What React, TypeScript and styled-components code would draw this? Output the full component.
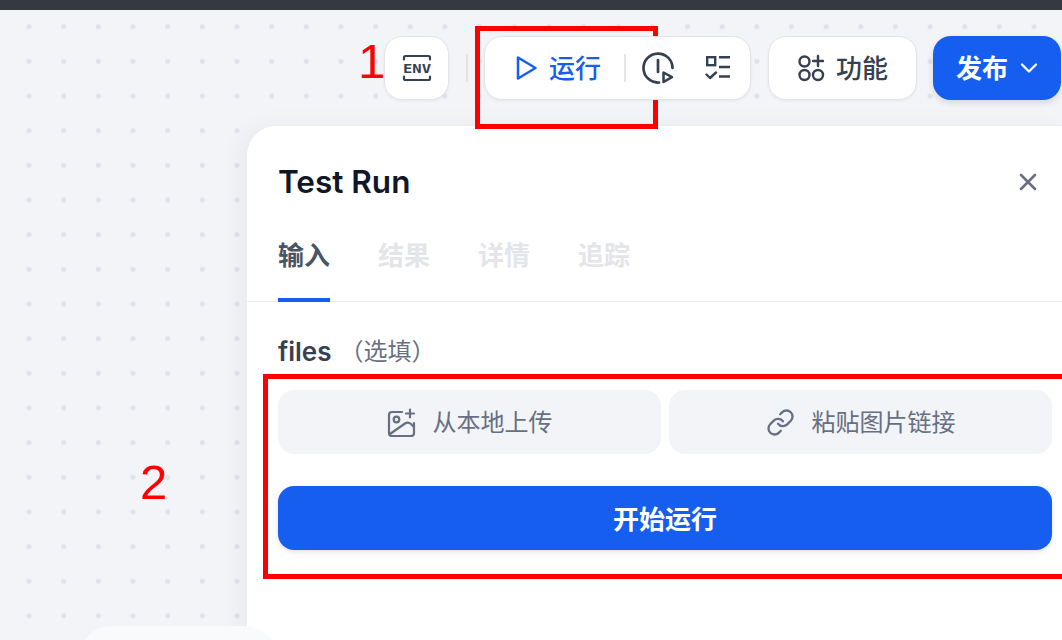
import { FC } from "react";
import styled, { createGlobalStyle } from "styled-components";

const GlobalStyle = createGlobalStyle`
  html, body {
    margin: 0;
    padding: 0;
    width: 1062px;
    height: 640px;
    overflow: hidden;
    font-family: Inter, "Noto Sans CJK SC", sans-serif;
  }
  * {
    box-sizing: border-box;
  }
`;

const Page = styled.div`
  position: relative;
  display: flex;
  flex-direction: column;
  width: 1062px;
  height: 640px;
  overflow: hidden;
`;

const TopStrip = styled.div`
  flex: none;
  height: 10px;
  background-color: #353a40;
`;

const Canvas = styled.div`
  position: relative;
  flex: 1;
  min-height: 0;
  display: flex;
  flex-direction: column;
  padding-top: 26px;
  background-color: #f2f4f7;
  background-image: radial-gradient(circle, #e1e3ec 2.4px, transparent 2.9px);
  background-size: 34.67px 34.67px;
  background-position: 11.7px -0.6px;
`;

const Toolbar = styled.div`
  position: relative;
  z-index: 1;
  flex: none;
  display: flex;
  justify-content: flex-end;
  align-items: center;
  height: 64px;
  padding-right: 1px;
`;

const ToolCard = styled.div`
  display: flex;
  align-items: center;
  height: 64px;
  background-color: #fff;
  border: 1px solid #e3e5e9;
  border-radius: 18px;
  box-shadow: 0 1px 3px rgba(16, 24, 40, 0.06);
`;

const EnvCard = styled(ToolCard)`
  width: 65px;
  justify-content: center;
`;

const ToolDivider = styled.div<{ $gap: number }>`
  width: 2px;
  height: 28px;
  margin: 0 ${(props) => props.$gap}px;
  background-color: #e3e5e9;
`;

const RunGroup = styled(ToolCard)`
  width: 267px;
  padding-left: 29px;
  margin-right: 17px;
  margin-left: -1px;
`;

const RunLabel = styled.span`
  margin: 2px 23px 0 11px;
  font-size: 26px;
  font-weight: 500;
  line-height: 1;
  color: #155eef;
`;

const ClockIcon = styled.svg`
  margin-left: 16px;
  flex: none;
`;

const ListIcon = styled.svg`
  margin-left: 31px;
  flex: none;
`;

const FeatureCard = styled(ToolCard)`
  width: 149px;
  justify-content: center;
  gap: 11px;
  margin-right: 16px;
  font-size: 26px;
  font-weight: 500;
  color: #354052;
`;

// the CJK face sits a little low in its line box
const RaisedLabel = styled.span<{ $by: number }>`
  margin-bottom: ${(props) => props.$by}px;
`;

const PublishButton = styled.button`
  display: flex;
  align-items: center;
  justify-content: center;
  gap: 12px;
  width: 128px;
  height: 64px;
  padding: 0;
  border: none;
  border-radius: 18px;
  background-color: #155eef;
  box-shadow: 0 3px 6px rgba(16, 24, 40, 0.12);
  color: #fff;
  font-family: inherit;
  font-size: 26px;
  font-weight: 600;
`;

const Panel = styled.section`
  flex: 1;
  display: flex;
  flex-direction: column;
  margin-top: 25px;
  margin-left: 246px;
  background-color: #fff;
  border-top: 1px solid #eceef2;
  border-left: 1px solid #eceef2;
  border-top-left-radius: 30px;
  box-shadow: -8px 0 24px rgba(16, 24, 40, 0.04);
`;

const PanelHeader = styled.div`
  display: flex;
  align-items: center;
  justify-content: space-between;
  height: 38px;
  margin-top: 37px;
  padding: 0 24px 0 31px;
`;

const PanelTitle = styled.h2`
  margin: 0;
  font-size: 31.5px;
  font-weight: 600;
  line-height: 38px;
  color: #101828;
`;

const Tabs = styled.div`
  display: flex;
  gap: 48px;
  margin-top: 29px;
  padding-left: 31px;
  border-bottom: 1px solid #eaecf0;
`;

const Tab = styled.div<{ $active?: boolean }>`
  height: 72px;
  padding-top: 8px;
  font-size: 26px;
  line-height: 36px;
  font-weight: 600;
  color: ${(props) => (props.$active ? "#495464" : "#e3e5e9")};
  border-bottom: 4px solid
    ${(props) => (props.$active ? "#155eef" : "transparent")};
  margin-bottom: -1px;
`;

const PanelBody = styled.div`
  display: flex;
  flex-direction: column;
  padding: 31px 10px 0 31px;
`;

const FieldLabel = styled.div`
  display: flex;
  align-items: center;
  height: 36px;
  font-size: 26px;
  font-weight: 600;
  color: #354052;
`;

const FieldHint = styled.span`
  margin-left: 8px;
  margin-bottom: 4px;
  font-size: 24px;
  font-weight: 400;
  color: #676f83;
`;

const UploadRow = styled.div`
  display: grid;
  grid-template-columns: 1fr 1fr;
  gap: 8px;
  margin-top: 21px;
`;

const UploadButton = styled.button`
  display: flex;
  align-items: center;
  justify-content: center;
  gap: 17px;
  height: 64px;
  padding: 0;
  border: none;
  border-radius: 16px;
  background-color: #f2f4f7;
  color: #676f83;
  font-family: inherit;
  font-size: 24px;
`;

const StartButton = styled.button`
  height: 64px;
  margin-top: 32px;
  padding: 0 0 2px;
  border: none;
  border-radius: 16px;
  background-color: #155eef;
  box-shadow: 0 2px 5px rgba(16, 24, 40, 0.12);
  color: #fff;
  font-family: inherit;
  font-size: 26px;
  font-weight: 600;
`;

// faded node peeking out behind the panel
const CanvasNode = styled.div`
  position: absolute;
  left: 78px;
  top: 616px;
  width: 200px;
  height: 120px;
  border-radius: 34px;
  background-color: #f9fafb;
`;

const RedBox = styled.div<{ $l: number; $t: number; $w: number; $h: number }>`
  position: absolute;
  left: ${(props) => props.$l}px;
  top: ${(props) => props.$t}px;
  width: ${(props) => props.$w}px;
  height: ${(props) => props.$h}px;
  border: 5px solid #fe0000;
  pointer-events: none;
`;

const Mark = styled.span<{ $l: number; $t: number }>`
  position: absolute;
  left: ${(props) => props.$l}px;
  top: ${(props) => props.$t}px;
  font-family: "Liberation Sans", sans-serif;
  font-size: 49px;
  line-height: 1;
  color: #fe0000;
`;

const EnvIcon: FC = () => (
  <svg width="30" height="28" viewBox="0 0 30 28" fill="none">
    <path
      d="M2 5.500V3.500C2 2.500 2.700 2 3.500 2H26.500C27.300 2 28 2.500 28 3.500V5.500M2 22.500V24.500C2 25.500 2.700 26 3.500 26H26.500C27.300 26 28 25.500 28 24.500V22.500"
      stroke="#354052"
      strokeWidth="2.200"
      strokeLinecap="round"
    />
    <text
      x="1"
      y="18.800"
      textLength="28"
      lengthAdjust="spacingAndGlyphs"
      fontFamily="'DejaVu Sans Mono', monospace"
      fontSize="12.500"
      fontWeight="700"
      fill="#354052"
    >
      ENV
    </text>
  </svg>
);

const PlayIcon: FC = () => (
  <svg width="24" height="26" viewBox="0 0 24 26" fill="none">
    <path
      d="M4 2.500V23.500L21.500 13L4 2.500Z"
      stroke="#155eef"
      strokeWidth="2.500"
      strokeLinejoin="round"
    />
  </svg>
);

const FeatureIcon: FC = () => (
  <svg width="28" height="28" viewBox="0 0 28 28" fill="none" stroke="#354052" strokeWidth="2.400">
    <circle cx="7.500" cy="7.500" r="5" />
    <circle cx="7.500" cy="21" r="5" />
    <circle cx="21" cy="21" r="5" />
    <path d="M21 2V12M16 7H26" strokeLinecap="round" />
  </svg>
);

const ImagePlusIcon: FC = () => (
  <svg width="29" height="29" viewBox="0 0 29 29" fill="none" stroke="#676f83" strokeWidth="2.200" strokeLinecap="round" strokeLinejoin="round">
    <path d="M15 4H5C3.300 4 2 5.300 2 7V25C2 26.700 3.300 28 5 28H24C25.700 28 27 26.700 27 25V15" />
    <circle cx="9.500" cy="11.500" r="2.800" />
    <path d="M3 26L18 15.500C20 14.200 22.500 14.700 24 16L27 19" />
    <path d="M23 1.500V9.500M19 5.500H27" />
  </svg>
);

const LinkIcon: FC = () => (
  <svg width="29" height="29" viewBox="0 0 24 24" fill="none" stroke="#676f83" strokeWidth="1.900" strokeLinecap="round" strokeLinejoin="round">
    <path d="M10 13a5 5 0 0 0 7.540.540l3-3a5 5 0 0 0-7.070-7.070l-1.720 1.710" />
    <path d="M14 11a5 5 0 0 0-7.540-.540l-3 3a5 5 0 0 0 7.070 7.070l1.710-1.710" />
  </svg>
);

const App: FC = () => {
  return (
    <Page>
      <GlobalStyle />
      <TopStrip />
      <Canvas>
        <CanvasNode />
        <Toolbar>
          <EnvCard>
            <EnvIcon />
          </EnvCard>
          <ToolDivider $gap={17} />
          <RunGroup>
            <PlayIcon />
            <RunLabel>运行</RunLabel>
            <ToolDivider $gap={0} />
            <ClockIcon width="32" height="32" viewBox="0 0 32 32" fill="none">
              <path
                d="M17 30.500A14.500 14.500 0 1 1 30.500 16"
                stroke="#354052"
                strokeWidth="2.700"
                strokeLinecap="round"
              />
              <path d="M16 8V20" stroke="#354052" strokeWidth="2.700" strokeLinecap="round" />
              <path
                d="M21.500 20.500V30L30 25.200L21.500 20.500Z"
                stroke="#354052"
                strokeWidth="2.500"
                strokeLinejoin="round"
              />
            </ClockIcon>
            <ListIcon width="26" height="26" viewBox="0 0 26 26" fill="none" stroke="#354052" strokeWidth="2.400">
              <rect x="2.200" y="2.200" width="8" height="8" />
              <path d="M1.500 19.500L5 23L11 17.500" strokeLinecap="round" strokeLinejoin="round" />
              <path d="M14 2.200H25M14 12H25M14 21.500H25" />
            </ListIcon>
          </RunGroup>
          <FeatureCard>
            <FeatureIcon />
            <RaisedLabel $by={4}>功能</RaisedLabel>
          </FeatureCard>
          <PublishButton>
            <RaisedLabel $by={4}>发布</RaisedLabel>
            <svg width="18" height="12" viewBox="0 0 18 12" fill="none">
              <path d="M2 2.500L9 9.500L16 2.500" stroke="#fff" strokeWidth="2.300" strokeLinecap="round" strokeLinejoin="round" />
            </svg>
          </PublishButton>
        </Toolbar>
        <Panel>
          <PanelHeader>
            <PanelTitle>Test Run</PanelTitle>
            <svg width="20" height="20" viewBox="0 0 20 20" fill="none">
              <path d="M3 3L17 17M17 3L3 17" stroke="#676f83" strokeWidth="2.600" strokeLinecap="round" />
            </svg>
          </PanelHeader>
          <Tabs>
            <Tab $active>输入</Tab>
            <Tab>结果</Tab>
            <Tab>详情</Tab>
            <Tab>追踪</Tab>
          </Tabs>
          <PanelBody>
            <FieldLabel>
              files
              <FieldHint>（选填）</FieldHint>
            </FieldLabel>
            <UploadRow>
              <UploadButton>
                <ImagePlusIcon />
                <RaisedLabel $by={4}>从本地上传</RaisedLabel>
              </UploadButton>
              <UploadButton>
                <LinkIcon />
                <RaisedLabel $by={4}>粘贴图片链接</RaisedLabel>
              </UploadButton>
            </UploadRow>
            <StartButton>开始运行</StartButton>
          </PanelBody>
        </Panel>
      </Canvas>
      <RedBox $l={475} $t={26} $w={183} $h={103} />
      <RedBox $l={263} $t={374} $w={820} $h={205} />
      <Mark $l={358} $t={37}>1</Mark>
      <Mark $l={140} $t={458}>2</Mark>
    </Page>
  );
};

export default App;
